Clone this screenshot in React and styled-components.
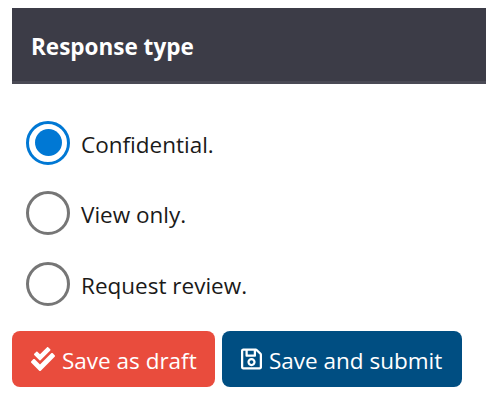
import React from "react";
import styled, { createGlobalStyle } from "styled-components";
import { FaCheckDouble, FaRegSave } from "react-icons/fa";

const GlobalStyle = createGlobalStyle`
    html, body {
        margin: 0;
        background: #fff;
    }
    body {
        font-family: "Open Sans", "Noto Sans", sans-serif;
        color: #1b1a19;
    }
`;

const Page = styled.div`
    display: flex;
    flex-direction: column;
    width: 474px;
    padding: 8px 0 0 12px;
    box-sizing: content-box;
`;

const Header = styled.div`
    display: flex;
    align-items: center;
    height: 69px;
    padding: 4px 0 0 19px;
    background: #3c3c47;
    border-bottom: 3px solid #4a4a55;
    font-size: 22.5px;
    font-weight: 700;
    color: #fff;
`;

const Options = styled.div`
    display: flex;
    flex-direction: column;
    gap: 25.5px;
    padding: 36px 0 0 14px;
`;

const Option = styled.label`
    display: flex;
    align-items: center;
    gap: 11px;
    height: 45px;
    font-size: 22.5px;
`;

const OptionText = styled.span`
    padding-top: 3px;
`;

const Radio = styled.span`
    display: flex;
    align-items: center;
    justify-content: center;
    width: 44px;
    height: 44px;
    box-sizing: border-box;
    border-radius: 50%;
    border: 3.5px solid ${(props) => (props.$checked ? "#0078d4" : "#767676")};

    &::after {
        content: "";
        display: ${(props) => (props.$checked ? "block" : "none")};
        width: 27px;
        height: 27px;
        border-radius: 50%;
        background: #0078d4;
    }
`;

const Actions = styled.div`
    display: flex;
    gap: 7px;
    margin-top: 25px;
`;

const Button = styled.button`
    display: flex;
    align-items: center;
    justify-content: flex-start;
    gap: 7px;
    width: ${(props) => props.$width}px;
    height: 56px;
    padding: 0 0 0 19px;
    border: none;
    border-radius: 8px;
    background: ${(props) => props.$bg};
    color: #fff;
    font-family: inherit;
    font-size: 22.5px;

    svg {
        width: ${(props) => props.$iconWidth}px;
        height: 24px;
    }
`;

const ButtonText = styled.span`
    padding-top: 2px;
`;

const options = [
    { label: "Confidential.", checked: true },
    { label: "View only.", checked: false },
    { label: "Request review.", checked: false },
];

export default function App() {
    return (
        <>
            <GlobalStyle />
            <Page>
                <Header>Response type</Header>
                <Options>
                    {options.map((o) => (
                        <Option key={o.label}>
                            <Radio $checked={o.checked} />
                            <OptionText>{o.label}</OptionText>
                        </Option>
                    ))}
                </Options>
                <Actions>
                    <Button $bg="#e94c3d" $width={203} $iconWidth={24}>
                        <FaCheckDouble />
                        <ButtonText>Save as draft</ButtonText>
                    </Button>
                    <Button $bg="#004e82" $width={240} $iconWidth={21}>
                        <FaRegSave />
                        <ButtonText>Save and submit</ButtonText>
                    </Button>
                </Actions>
            </Page>
        </>
    );
}
